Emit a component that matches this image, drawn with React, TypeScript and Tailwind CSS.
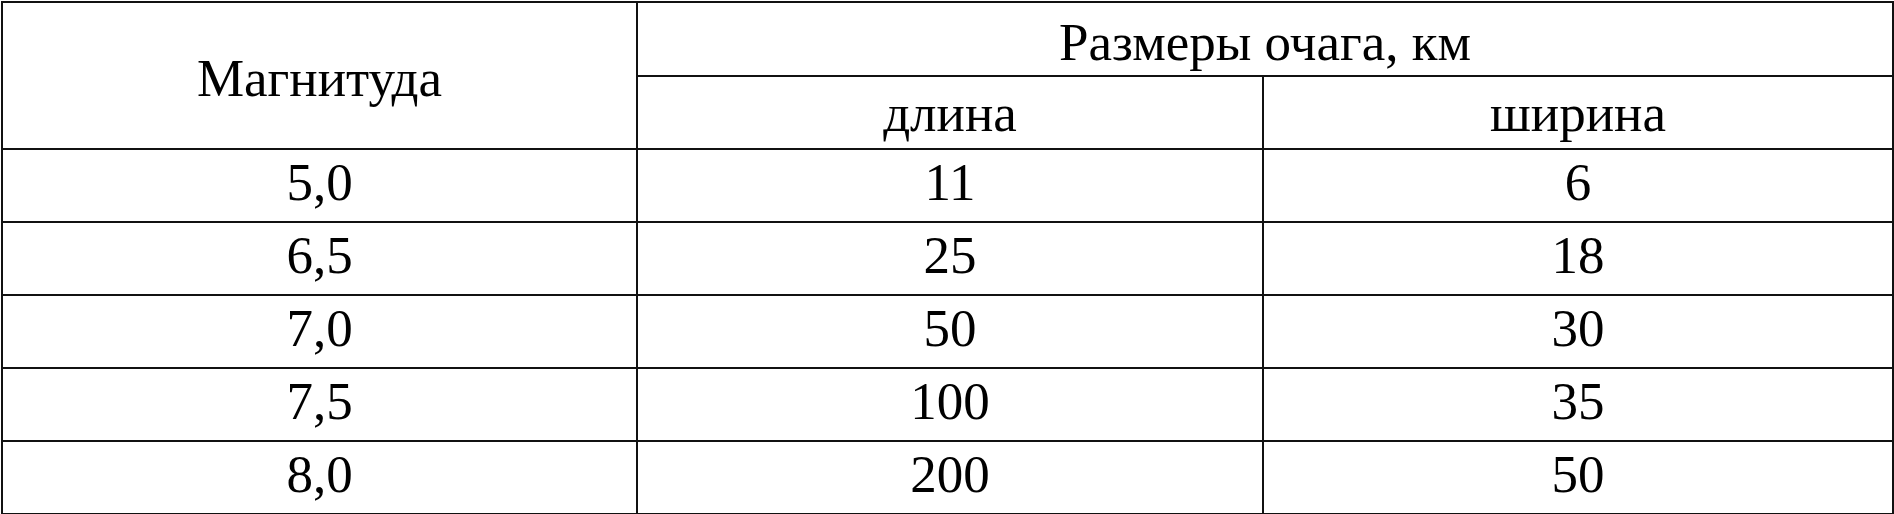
const rows = [
  ["5,0", "11", "6"],
  ["6,5", "25", "18"],
  ["7,0", "50", "30"],
  ["7,5", "100", "35"],
  ["8,0", "200", "50"],
];

export default function App() {
  return (
    <div className="w-[1894px] h-[514px] bg-white pt-px pl-px">
      <table
        className="table-fixed border-collapse w-[1891px] text-black text-[53px] leading-[58px]"
        style={{ fontFamily: '"Liberation Serif", "Times New Roman", serif' }}
      >
        <colgroup>
          <col className="w-[635px]" />
          <col className="w-[626px]" />
          <col className="w-[630px]" />
        </colgroup>
        <thead>
          <tr className="h-[74px]">
            <th rowSpan={2} className="border-2 border-[#111] font-normal text-center align-middle p-0 pt-[4px]">
              Магнитуда
            </th>
            <th colSpan={2} className="border-2 border-[#111] font-normal text-center align-middle p-0 pt-[5px]">
              Размеры очага, км
            </th>
          </tr>
          <tr className="h-[73px]">
            <th className="border-2 border-[#111] font-normal text-center align-middle p-0">длина</th>
            <th className="border-2 border-[#111] font-normal text-center align-middle p-0">ширина</th>
          </tr>
        </thead>
        <tbody>
          {rows.map((r) => (
            <tr key={r[0]} className="h-[73px]">
              {r.map((v, i) => (
                <td key={i} className="border-2 border-[#111] text-center align-middle p-0 pb-[7px]">
                  {v}
                </td>
              ))}
            </tr>
          ))}
        </tbody>
      </table>
    </div>
  );
}
